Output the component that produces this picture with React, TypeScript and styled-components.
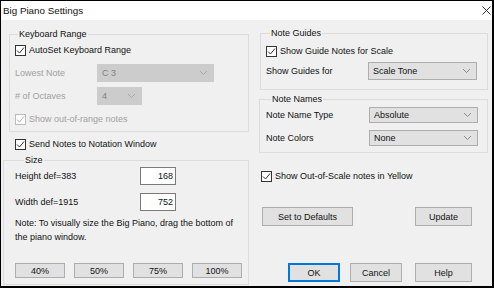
import React from "react";
import styled, {createGlobalStyle} from "styled-components";

const GlobalStyle = createGlobalStyle`
  * { box-sizing: border-box; }
  body {
    margin: 0;
    font-family: "Liberation Sans", Arial, sans-serif;
    font-size: 9px;
    color: #111;
    background: #fff;
  }
`;

const Window = styled.div`
  width: 494px;
  height: 288px;
  display: flex;
  flex-direction: column;
  border: 1px solid #000;
  border-right-width: 2px;
  border-bottom-width: 2px;
  background: #f0f0f0;
`;

const TitleBar = styled.div`
  height: 19px;
  flex: none;
  display: flex;
  align-items: center;
  justify-content: space-between;
  padding: 0 0 0 2px;
  background: #fff;
  font-size: 9.8px;
`;

const CloseIcon = styled.svg`
  width: 9px;
  height: 9px;
  margin-right: 1px;
`;

const Body = styled.div`
  flex: 1;
  display: flex;
`;

const LeftCol = styled.div`
  width: 246px;
  margin-left: 2px;
  display: flex;
  flex-direction: column;
`;

const RightCol = styled.div`
  width: 229px;
  margin-left: 10px;
  display: flex;
  flex-direction: column;
`;

const Group = styled.fieldset<{$top: number; $left?: number; $pl: number; $pt: number; $pb: number; $lm: number}>`
  margin: ${({$top}) => $top}px 0 0 ${({$left}) => $left ?? 0}px;
  padding: ${({$pt}) => $pt}px 0 ${({$pb}) => $pb}px ${({$pl}) => $pl}px;
  border: 1px solid #dcdcdc;
  min-width: 0;

  legend {
    margin-left: ${({$lm}) => $lm}px;
    padding: 0 1px;
    line-height: 12px;
  }
`;

const Row = styled.div<{$mt?: number; $h?: number}>`
  display: flex;
  align-items: center;
  height: ${({$h}) => $h ?? 14}px;
  margin-top: ${({$mt}) => $mt ?? 0}px;
`;

const Label = styled.span<{$w?: number; $disabled?: boolean}>`
  width: ${({$w}) => ($w ? `${$w}px` : "auto")};
  flex: none;
  color: ${({$disabled}) => ($disabled ? "#a0a0a0" : "inherit")};
  white-space: nowrap;
`;

const Box = styled.span<{$disabled?: boolean}>`
  width: 11px;
  height: 11px;
  flex: none;
  display: inline-flex;
  align-items: center;
  justify-content: center;
  border: 1px solid ${({$disabled}) => ($disabled ? "#bcbcbc" : "#333")};
  background: #fff;
  margin-right: 3px;
`;

const Check: React.FC<{label: string; disabled?: boolean}> = ({label, disabled}) => (
  <>
    <Box $disabled={disabled}>
      <svg width="9" height="9" viewBox="0 0 9 9">
        <path d="M1 4.5 L3.5 7 L8 1.5" fill="none" stroke={disabled ? "#bcbcbc" : "#333"} strokeWidth="1"/>
      </svg>
    </Box>
    <Label $disabled={disabled}>{label}</Label>
  </>
);

const Combo = styled.div<{$w: number; $disabled?: boolean}>`
  width: ${({$w}) => $w}px;
  height: 100%;
  display: flex;
  align-items: center;
  justify-content: space-between;
  padding: 0 6px 0 4px;
  border: 1px solid ${({$disabled}) => ($disabled ? "#cccccc" : "#adadad")};
  background: ${({$disabled}) => ($disabled ? "#cccccc" : "#e1e1e1")};
  color: ${({$disabled}) => ($disabled ? "#838383" : "inherit")};
`;

const Dropdown: React.FC<{value: string; width: number; disabled?: boolean}> = ({value, width, disabled}) => (
  <Combo $w={width} $disabled={disabled}>
    <span>{value}</span>
    <svg width="7" height="4" viewBox="0 0 7 4">
      <path d="M0 0 L3.5 3.5 L7 0" fill="none" stroke={disabled ? "#a8a8a8" : "#8a8a8a"} strokeWidth="1"/>
    </svg>
  </Combo>
);

const NumInput = styled.div`
  width: 36px;
  height: 100%;
  margin-left: auto;
  margin-right: 72px;
  display: flex;
  align-items: center;
  justify-content: flex-end;
  padding-right: 2px;
  background: #fff;
  border: 1px solid #7a7a7a;
`;

const Note = styled.p`
  margin: 5px 0 0;
  line-height: 14px;
  white-space: nowrap;
`;

const ButtonRow = styled.div<{$mt: number; $gap?: number}>`
  display: flex;
  gap: ${({$gap}) => $gap ?? 9}px;
  margin-top: ${({$mt}) => $mt}px;
`;

const Button = styled.div<{$w: number; $h?: number; $ml?: number; $primary?: boolean}>`
  width: ${({$w}) => $w}px;
  height: ${({$h}) => $h ?? 19}px;
  margin-left: ${({$ml}) => $ml ?? 0}px;
  display: flex;
  align-items: center;
  justify-content: center;
  background: #e1e1e1;
  border: ${({$primary}) => ($primary ? "2px solid #0078d7" : "1px solid #adadad")};
`;

export default function App() {
  return (
    <>
      <GlobalStyle/>
      <Window>
        <TitleBar>
          <span>Big Piano Settings</span>
          <CloseIcon viewBox="0 0 9 9">
            <path d="M0.5 0.5 L8.5 8.5 M8.5 0.5 L0.5 8.5" stroke="#333" strokeWidth="1"/>
          </CloseIcon>
        </TitleBar>
        <Body>
          <LeftCol>
            <Group $top={8} $left={6} $pl={5} $pt={3} $pb={5} $lm={3}>
              <legend>Keyboard Range</legend>
              <Row><Check label="AutoSet Keyboard Range"/></Row>
              <Row $mt={7} $h={18}>
                <Label $w={82} $disabled>Lowest Note</Label>
                <Dropdown value="C 3" width={117} disabled/>
              </Row>
              <Row $mt={5} $h={18}>
                <Label $w={82} $disabled># of Octaves</Label>
                <Dropdown value="4" width={45} disabled/>
              </Row>
              <Row $mt={7}><Check label="Show out-of-range notes" disabled/></Row>
            </Group>
            <Row $mt={5} style={{paddingLeft: 12}}>
              <Check label="Send Notes to Notation Window"/>
            </Row>
            <Group $top={3} $pl={11} $pt={1} $pb={6} $lm={9}>
              <legend>Size</legend>
              <Row $h={18}>
                <Label>Height def=383</Label>
                <NumInput>168</NumInput>
              </Row>
              <Row $mt={8} $h={18}>
                <Label>Width def=1915</Label>
                <NumInput>752</NumInput>
              </Row>
              <Note>Note: To visually size the Big Piano, drag the bottom of<br/>the piano window.</Note>
              <ButtonRow $mt={19}>
                <Button $w={50} $h={15}>40%</Button>
                <Button $w={50} $h={15}>50%</Button>
                <Button $w={50} $h={15}>75%</Button>
                <Button $w={50} $h={15}>100%</Button>
              </ButtonRow>
            </Group>
          </LeftCol>
          <RightCol>
            <Group $top={7} $left={1} $pl={5} $pt={5} $pb={9} $lm={4}>
              <legend>Note Guides</legend>
              <Row><Check label="Show Guide Notes for Scale"/></Row>
              <Row $mt={4} $h={18}>
                <Label $w={102}>Show Guides for</Label>
                <Dropdown value="Scale Tone" width={109}/>
              </Row>
            </Group>
            <Group $top={3} $pl={6} $pt={2} $pb={6} $lm={5}>
              <legend>Note Names</legend>
              <Row $h={16}>
                <Label $w={103}>Note Name Type</Label>
                <Dropdown value="Absolute" width={109}/>
              </Row>
              <Row $mt={7} $h={16}>
                <Label $w={103}>Note Colors</Label>
                <Dropdown value="None" width={109}/>
              </Row>
            </Group>
            <Row $mt={16} style={{paddingLeft: 2}}>
              <Check label="Show Out-of-Scale notes in Yellow"/>
            </Row>
            <ButtonRow $mt={24}>
              <Button $w={91} $ml={3}>Set to Defaults</Button>
              <Button $w={57} $ml={53}>Update</Button>
            </ButtonRow>
            <ButtonRow $mt={37} $gap={10}>
              <Button $w={52} $ml={29} $primary>OK</Button>
              <Button $w={52}>Cancel</Button>
              <Button $w={57} $ml={3}>Help</Button>
            </ButtonRow>
          </RightCol>
        </Body>
      </Window>
    </>
  );
}
